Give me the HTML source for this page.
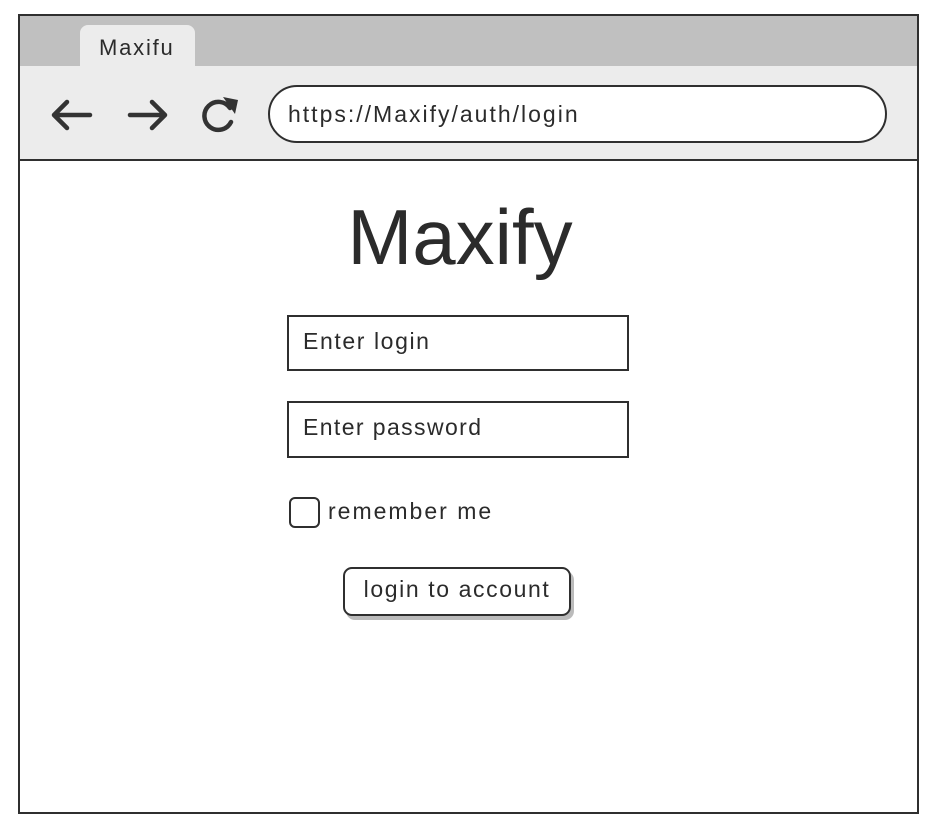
<!DOCTYPE html>
<html><head><style>
*{margin:0;padding:0;box-sizing:border-box}
body{width:938px;height:834px;background:#fff;position:relative;font-family:"Liberation Sans",sans-serif;color:#2b2b2b;overflow:hidden}
.a{position:absolute}
.t{letter-spacing:1.6px}
</style></head><body>
<div class="a" style="left:18px;top:14px;width:901px;height:800px;border:2px solid #2f2f2f;background:#fff"></div>
<div class="a" style="left:20px;top:16px;width:897px;height:50px;background:#c0c0c0"></div>
<div class="a" style="left:80px;top:25px;width:115px;height:41px;background:#ececec;border-radius:8px 8px 0 0"></div>
<div class="a t" style="left:99px;top:35px;font-size:22px;letter-spacing:1.8px">Maxifu</div>
<div class="a" style="left:20px;top:66px;width:897px;height:95px;background:#ececec;border-bottom:2px solid #2f2f2f"></div>
<svg class="a" style="left:45px;top:90px" width="200" height="50" viewBox="0 0 200 50">
<g stroke="#333" stroke-width="4.5" fill="none" stroke-linecap="round" stroke-linejoin="round">
<path d="M9 25H45M22 12L9 25L22 38"/>
<path d="M85 25H120M107 12L120 25L107 38"/>
<path d="M185 18A14 14 0 1 0 186 32"/>
</g>
<path d="M178 7L193 10L190 24Z" fill="#333"/>
</svg>
<div class="a" style="left:268px;top:85px;width:619px;height:58px;border:2px solid #2f2f2f;border-radius:29px;background:#fff"></div>
<div class="a" style="left:288px;top:101px;font-size:23px;letter-spacing:2px">https://Maxify/auth/login</div>
<div class="a" style="left:0;width:920px;top:192px;text-align:center;font-size:78px">Maxify</div>
<div class="a" style="left:287px;top:315px;width:342px;height:56px;border:2px solid #2f2f2f"></div>
<div class="a t" style="left:303px;top:328px;font-size:23px">Enter login</div>
<div class="a" style="left:287px;top:401px;width:342px;height:57px;border:2px solid #2f2f2f"></div>
<div class="a t" style="left:303px;top:414px;font-size:23px;letter-spacing:1.4px">Enter password</div>
<div class="a" style="left:289px;top:497px;width:31px;height:31px;border:2px solid #2f2f2f;border-radius:6px"></div>
<div class="a" style="left:328px;top:498px;font-size:23px;letter-spacing:2px">remember me</div>
<div class="a" style="left:343px;top:567px;width:228px;height:49px;border:2px solid #2f2f2f;border-radius:9px;background:#fff;box-shadow:3px 4px 0 #bbb"></div>
<div class="a t" style="left:343px;top:576px;width:228px;text-align:center;font-size:23px">login to account</div>
</body></html>
